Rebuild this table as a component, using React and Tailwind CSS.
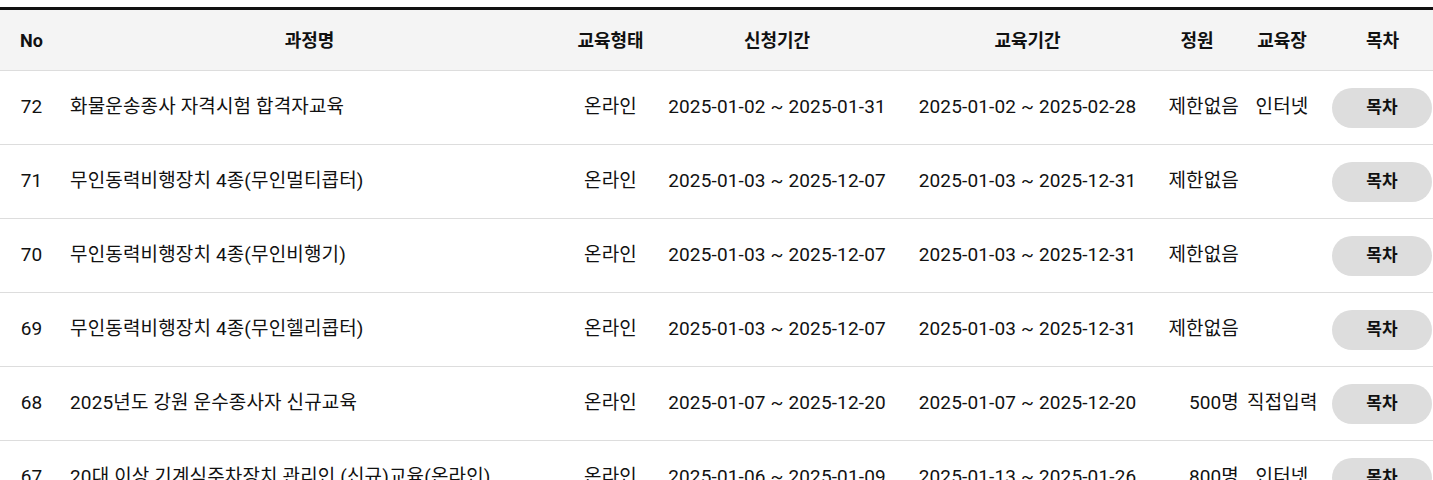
import React from 'react';

const rows = [
  { no: 72, title: '화물운송종사 자격시험 합격자교육', type: '온라인', apply: '2025-01-02 ~ 2025-01-31', edu: '2025-01-02 ~ 2025-02-28', cap: '제한없음', place: '인터넷' },
  { no: 71, title: '무인동력비행장치 4종(무인멀티콥터)', type: '온라인', apply: '2025-01-03 ~ 2025-12-07', edu: '2025-01-03 ~ 2025-12-31', cap: '제한없음', place: '' },
  { no: 70, title: '무인동력비행장치 4종(무인비행기)', type: '온라인', apply: '2025-01-03 ~ 2025-12-07', edu: '2025-01-03 ~ 2025-12-31', cap: '제한없음', place: '' },
  { no: 69, title: '무인동력비행장치 4종(무인헬리콥터)', type: '온라인', apply: '2025-01-03 ~ 2025-12-07', edu: '2025-01-03 ~ 2025-12-31', cap: '제한없음', place: '' },
  { no: 68, title: '2025년도 강원 운수종사자 신규교육', type: '온라인', apply: '2025-01-07 ~ 2025-12-20', edu: '2025-01-07 ~ 2025-12-20', cap: '500명', place: '직접입력' },
  { no: 67, title: '20대 이상 기계식주차장치 관리인 (신규)교육(온라인)', type: '온라인', apply: '2025-01-06 ~ 2025-01-09', edu: '2025-01-13 ~ 2025-01-26', cap: '800명', place: '인터넷' },
];

const cols = 'grid grid-cols-[62px_495px_107px_226px_275px_82px_70px_116px]';

export default function App() {
  return (
    <div className="bg-white pt-[7px] font-['Roboto','Noto_Sans_CJK_KR',sans-serif] text-[#111]">
      <div className="border-t-[3px] border-[#111]">
        {/* Header */}
        <div className={`${cols} h-[61px] items-center bg-[#f4f4f4] border-b border-[#dddddd] text-[18px] font-bold`}>
          <div className="text-center pl-[1px]">No</div>
          <div className="text-center">과정명</div>
          <div className="text-center">교육형태</div>
          <div className="text-center">신청기간</div>
          <div className="text-center">교육기간</div>
          <div className="text-center pr-[18px]">정원</div>
          <div className="text-center">교육장</div>
          <div className="text-center pl-[15px]">목차</div>
        </div>

        {/* Rows */}
        {rows.map(r => (
          <div key={r.no} className={`${cols} h-[74px] items-center border-b border-[#dddddd] text-[19px] tracking-[0.15px]`}>
            <div className="text-center pl-[1px]">{r.no}</div>
            <div className="pl-[8px] whitespace-nowrap overflow-hidden">{r.title}</div>
            <div className="text-center">{r.type}</div>
            <div className="text-center whitespace-nowrap">{r.apply}</div>
            <div className="text-center whitespace-nowrap">{r.edu}</div>
            <div className="text-right pr-[8px]">{r.cap}</div>
            <div className="text-center whitespace-nowrap">{r.place}</div>
            <div className="pl-[15px]">
              <button className="w-[100px] h-[40px] rounded-full bg-[#dddddd] text-[17px] font-bold tracking-normal">목차</button>
            </div>
          </div>
        ))}
      </div>
    </div>
  );
}
